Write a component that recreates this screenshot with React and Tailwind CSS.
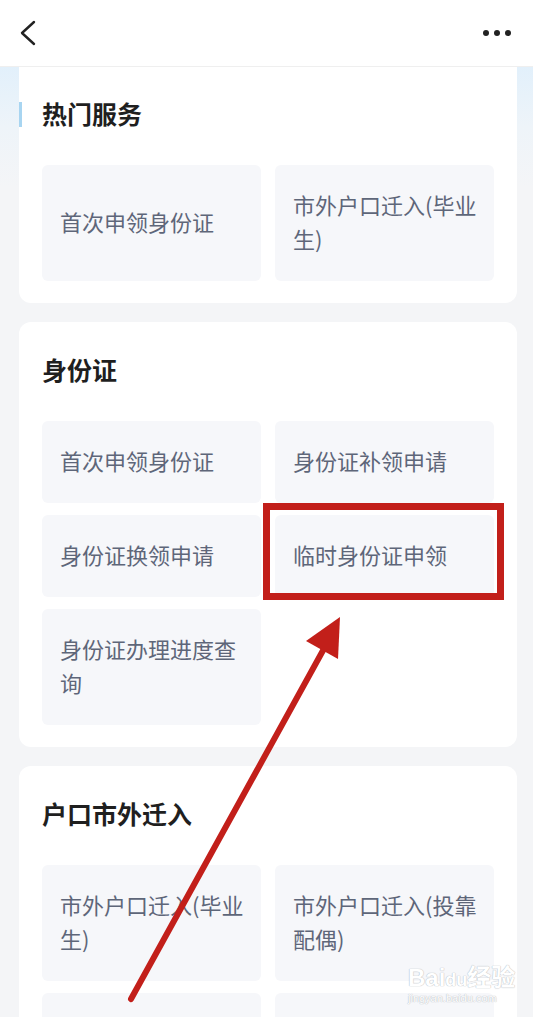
import React from 'react'

const font = { fontFamily: '"Noto Sans CJK SC", "Noto Sans", sans-serif' }

const sections = [
    { title: '热门服务', accent: true, items: ['首次申领身份证', '市外户口迁入(毕业生)'] },
    {
        title: '身份证',
        items: ['首次申领身份证', '身份证补领申请', '身份证换领申请', '临时身份证申领', '身份证办理进度查询'],
    },
    { title: '户口市外迁入', items: ['市外户口迁入(毕业生)', '市外户口迁入(投靠配偶)', '', ''] },
]

function Tile({ label }) {
    return (
        <div className="rounded-md bg-[#f6f7fa] pl-[18px] pr-[12px] pt-[22px] pb-[26px] min-h-[82px] flex items-center">
            <span className="text-[22px] leading-[34px] text-[#5e6679]">{label}</span>
        </div>
    )
}

function Section({ title, items, accent, first }) {
    return (
        <section
            className={
                'relative bg-white px-[23px] pb-[22px] ' +
                (first ? 'rounded-b-xl pt-[31px]' : 'rounded-xl pt-[32px] mt-[19px]')
            }
        >
            {accent && <span className="absolute left-0 top-[35px] w-[3px] h-[25px] bg-[#a8d5f1]" />}
            <h2 className="text-[25px] leading-[30px] font-bold text-[#1f1f1f]">{title}</h2>
            <div className="mt-[37px] grid grid-cols-2 gap-x-[14px] gap-y-[12px]">
                {items.map((it, i) => (
                    <Tile key={i} label={it} />
                ))}
            </div>
        </section>
    )
}

export default function App() {
    return (
        <div className="relative h-[1017px] overflow-hidden bg-[#f4f5f7]" style={font}>
            <header className="h-[67px] bg-white border-b border-[#efefef] flex items-center justify-between pl-[19px] pr-[22px]">
                <svg width="18" height="28" viewBox="0 0 18 28" fill="none">
                    <path d="M15 3 L3 14 L15 25" stroke="#222" strokeWidth="2.4" strokeLinecap="round" strokeLinejoin="round" />
                </svg>
                <div className="flex gap-[5px]">
                    <span className="w-[6px] h-[6px] rounded-full bg-[#222]" />
                    <span className="w-[6px] h-[6px] rounded-full bg-[#222]" />
                    <span className="w-[6px] h-[6px] rounded-full bg-[#222]" />
                </div>
            </header>

            <main className="bg-[linear-gradient(180deg,#e2f0fb_0px,#eef4f9_60px,#f4f5f7_120px)] pl-[19px] pr-[16px]">
                {sections.map((s, i) => (
                    <Section key={i} {...s} first={i === 0} />
                ))}
            </main>

            {/* annotation: red box + arrow */}
            <div className="absolute left-[263px] top-[503px] w-[241px] h-[97px] border-[7px] border-[#c21f1a]" />
            <svg className="absolute inset-0 pointer-events-none" width="533" height="1017">
                <line x1="131" y1="999" x2="326" y2="645" stroke="#c21f1a" strokeWidth="6" strokeLinecap="round" />
                <polygon points="340,617 306,641 338,659" fill="#c21f1a" />
            </svg>

            {/* watermark */}
            <div className="absolute left-[408px] top-[966px] text-white [text-shadow:0_0_1px_#b9bdc3,0_0_1px_#b9bdc3] leading-none" style={{ fontFamily: '"Liberation Sans", "Noto Sans CJK SC", sans-serif' }}>
                <div className="text-[24px] font-bold">Bai<span className="text-[18px]">du</span>经验</div>
                <div className="text-[11px] mt-[3px]">jingyan.baidu.com</div>
            </div>
        </div>
    )
}
